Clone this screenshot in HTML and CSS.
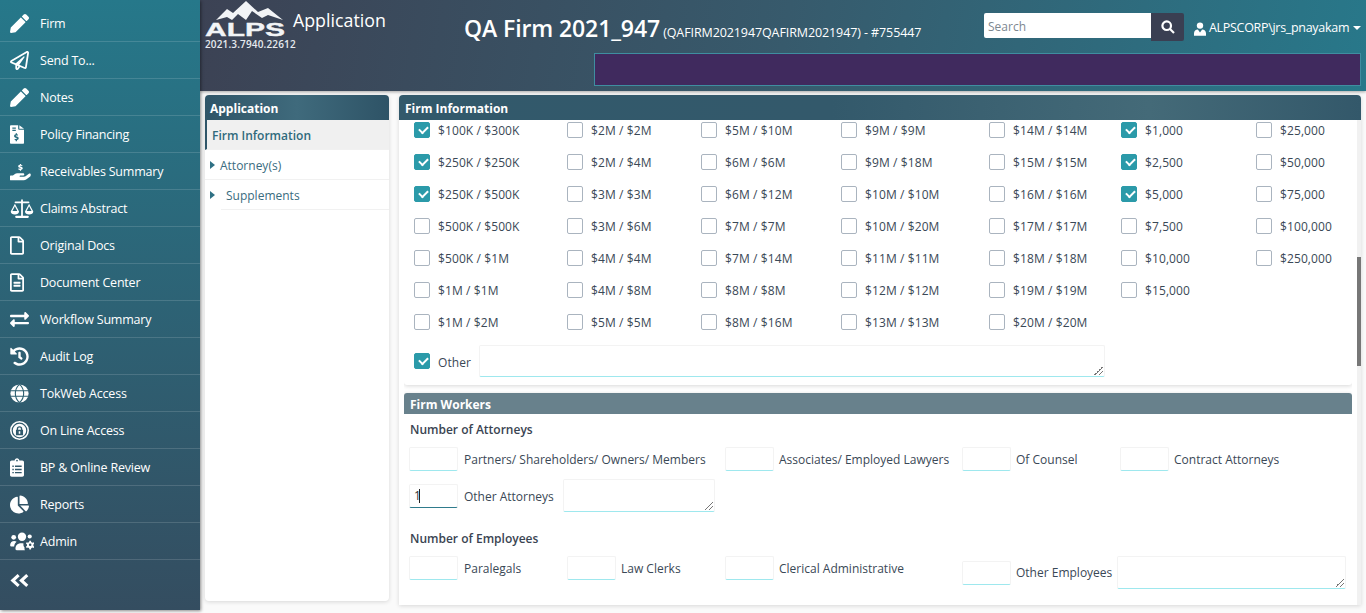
FILE: index.html
```html
<!DOCTYPE html>
<html lang="en">
<head>
<meta charset="utf-8">
<title>QA Firm 2021_947</title>
<link rel="stylesheet" href="styles.css">
</head>
<body>
<div class="app">
  <nav class="sidebar">
    <a class="nav-item"><svg class="ico" viewBox="0 0 512 512"><path d="M497.9 142.1l-46.1 46.1c-4.7 4.7-12.3 4.7-17 0l-111-111c-4.7-4.7-4.7-12.3 0-17l46.1-46.1c18.7-18.7 49.1-18.7 67.9 0l60.1 60.1c18.8 18.7 18.8 49.1 0 67.9zM284.2 99.8L21.6 362.4.4 483.9c-2.9 16.4 11.4 30.6 27.8 27.8l121.5-21.3 262.6-262.6c4.7-4.7 4.7-12.3 0-17l-111-111c-4.8-4.7-12.4-4.7-17.1 0z"/></svg><span>Firm</span></a>
    <a class="nav-item"><svg class="ico" viewBox="0 0 512 512"><path d="M440 6.5L24 246.4c-34.4 19.9-31.1 70.8 5.7 85.9L144 379.6V464c0 46.4 59.2 65.5 86.6 28.6l43.8-59.1 111.9 46.2c5.9 2.4 12.1 3.6 18.3 3.6 8.2 0 16.3-2.1 23.6-6.2 12.8-7.2 21.6-20 23.9-34.5l59.4-387.2c6.1-40.1-36.9-68.8-71.5-48.9zM192 464v-64.6l36.6 15.1L192 464zm212.6-28.7l-153.8-63.5L391 169.5c10.7-15.5-9.5-33.5-23.7-21.2L155.8 332.6 48 288 464 48l-59.4 387.3z"/></svg><span>Send To...</span></a>
    <a class="nav-item"><svg class="ico" viewBox="0 0 512 512"><path d="M497.9 142.1l-46.1 46.1c-4.7 4.7-12.3 4.7-17 0l-111-111c-4.7-4.7-4.7-12.3 0-17l46.1-46.1c18.7-18.7 49.1-18.7 67.9 0l60.1 60.1c18.8 18.7 18.8 49.1 0 67.9zM284.2 99.8L21.6 362.4.4 483.9c-2.9 16.4 11.4 30.6 27.8 27.8l121.5-21.3 262.6-262.6c4.7-4.7 4.7-12.3 0-17l-111-111c-4.8-4.7-12.4-4.7-17.1 0z"/></svg><span>Notes</span></a>
    <a class="nav-item"><svg class="ico doc" viewBox="0 0 384 512"><path fill-rule="evenodd" d="M0 24C0 11 11 0 24 0h200v104c0 13 11 24 24 24h136v360c0 13-11 24-24 24H24c-13 0-24-11-24-24zM256 0l128 96H256zM64 64v32h96V64zm0 64v32h96v-32zm128 96h-36v28c-26 4-44 24-44 48 0 30 24 42 50 50 20 6 28 10 28 18 0 8-10 12-20 12-12 0-24-4-34-10l-14 28c10 8 20 12 34 14v28h36v-28c28-4 46-24 46-50 0-30-24-42-50-50-20-6-28-10-28-18 0-6 8-10 18-10 12 0 22 4 30 8l14-28c-8-6-18-10-30-12z"/></svg><span>Policy Financing</span></a>
    <a class="nav-item"><svg class="ico hand" viewBox="0 0 576 512"><path d="M271 232v-20c-22-3-37-11-46-18l14-24c10 7 24 13 36 13 10 0 17-4 17-11 0-8-8-12-26-18-26-8-42-19-42-41 0-21 17-36 47-40V52h32v20c17 2 30 8 39 14l-13 24c-8-5-20-10-32-10-12 0-15 5-15 9 0 6 6 10 28 18 28 9 40 23 40 42 0 21-14 38-47 43v20z"/><path d="M565 326c-11-14-33-16-48-5l-90 66c-12 9-28 13-44 13H280c-9 0-16-7-16-16s7-16 16-16h78c16 0 31-11 34-27 3-20-12-37-32-37H200c-27 0-53 9-74 26l-46 38H16c-9 0-16 7-16 16v96c0 9 7 16 16 16h357c29 0 57-10 80-27l101-75c16-12 20-52 11-68z"/></svg><span>Receivables Summary</span></a>
    <a class="nav-item"><svg class="ico wide" viewBox="0 0 640 512"><path fill-rule="evenodd" d="M296 64V32c0-13 11-24 24-24s24 11 24 24v32h152c13 0 24 11 24 24s-11 24-24 24H344v336h136c13 0 24 11 24 24s-11 40-24 40H160c-13 0-24-27-24-40s11-24 24-24h136V112H144c-13 0-24-11-24-24s11-24 24-24z"/><path fill-rule="evenodd" d="M128 130L240 336c0 48-50 80-112 80S16 384 16 336zM128 196L62 320h132zM512 130l112 206c0 48-50 80-112 80s-112-32-112-80zM512 196l-66 124h132z"/></svg><span>Claims Abstract</span></a>
    <a class="nav-item"><svg class="ico doc" viewBox="0 0 384 512"><path d="M369.9 97.9L286 14C277 5 264.8-.1 252.1-.1H48C21.5 0 0 21.5 0 48v416c0 26.5 21.5 48 48 48h288c26.5 0 48-21.5 48-48V131.9c0-12.7-5.1-25-14.1-34zM332.1 128H256V51.9l76.1 76.1zM48 464V48h160v104c0 13.3 10.7 24 24 24h104v288H48z"/></svg><span>Original Docs</span></a>
    <a class="nav-item"><svg class="ico doc" viewBox="0 0 384 512"><path d="M288 248v28c0 6.6-5.4 12-12 12H108c-6.6 0-12-5.4-12-12v-28c0-6.6 5.4-12 12-12h168c6.6 0 12 5.4 12 12zm-12 72H108c-6.6 0-12 5.4-12 12v28c0 6.6 5.4 12 12 12h168c6.6 0 12-5.4 12-12v-28c0-6.6-5.4-12-12-12zm108-188.100V464c0 26.500-21.500 48-48 48H48c-26.500 0-48-21.500-48-48V48C0 21.500 21.500 0 48 0h204.100C264.800 0 277 5.100 286 14.100L369.900 98c9 8.900 14.100 21.200 14.100 33.900zm-128-80V128h76.100L256 51.900zM336 464V176H232c-13.300 0-24-10.700-24-24V48H48v416h288z"/></svg><span>Document Center</span></a>
    <a class="nav-item"><svg class="ico" viewBox="0 0 512 512"><path d="M0 168v-16c0-13.255 10.745-24 24-24h360V80c0-21.367 25.899-32.042 40.971-16.971l80 80c9.372 9.373 9.372 24.569 0 33.941l-80 80C409.956 271.982 384 261.456 384 240v-48H24c-13.255 0-24-10.745-24-24zm488 152H128v-48c0-21.314-25.862-32.080-40.971-16.971l-80 80c-9.372 9.373-9.372 24.569 0 33.941l80 80C102.057 463.997 128 453.437 128 432v-48h360c13.255 0 24-10.745 24-24v-16c0-13.255-10.745-24-24-24z"/></svg><span>Workflow Summary</span></a>
    <a class="nav-item"><svg class="ico" viewBox="0 0 512 512"><path d="M504 255.531c.253 136.64-111.18 248.372-247.82 248.468-59.015.042-113.223-20.53-155.822-54.911-11.077-8.94-11.905-25.541-1.839-35.607l11.267-11.267c8.609-8.609 22.353-9.551 31.891-1.984C173.062 425.135 212.781 440 256 440c101.705 0 184-82.311 184-184 0-101.705-82.311-184-184-184-48.814 0-93.149 18.969-126.068 49.932l50.754 50.754c10.08 10.08 2.941 27.314-11.313 27.314H24c-8.837 0-16-7.163-16-16V38.627c0-14.254 17.234-21.393 27.314-11.314l49.372 49.372C129.209 34.136 189.552 8 256 8c136.81 0 247.747 110.78 248 247.531zm-180.912 78.784l9.823-12.63c8.138-10.463 6.253-25.542-4.21-33.679L288 256.349V152c0-13.255-10.745-24-24-24h-16c-13.255 0-24 10.745-24 24v135.651l65.409 50.874c10.463 8.137 25.541 6.253 33.679-4.21z"/></svg><span>Audit Log</span></a>
    <a class="nav-item"><svg class="ico" viewBox="0 0 24 24"><circle cx="12" cy="12" r="11.5"/><path class="cut" d="M.5 8.500h23M.5 15.500h23M12 .5c-7 6-7 17 0 23M12 .5c7 6 7 17 0 23"/></svg><span>TokWeb Access</span></a>
    <a class="nav-item"><svg class="ico" viewBox="0 0 24 24"><path fill-rule="evenodd" d="M12 0a12 12 0 1 0 0 24 12 12 0 0 0 0-24zm0 2a10 10 0 1 1 0 20 10 10 0 0 1 0-20z"/><path fill-rule="evenodd" d="M12 3.500a8.500 8.500 0 1 0 0 17 8.500 8.500 0 0 0 0-17zM12 6.500a3.500 3.500 0 0 1 3.500 3.500v1h1v7h-9v-7h1v-1A3.500 3.500 0 0 1 12 6.500zm0 1.700a1.800 1.800 0 0 0-1.800 1.800v1h3.600v-1A1.800 1.800 0 0 0 12 8.200zM11 13v3h2v-3z"/></svg><span>On Line Access</span></a>
    <a class="nav-item"><svg class="ico doc" viewBox="0 0 384 512"><path fill-rule="evenodd" d="M336 64h-80c0-35.300-28.700-64-64-64s-64 28.700-64 64H48C21.500 64 0 85.500 0 112v352c0 26.500 21.500 48 48 48h288c26.500 0 48-21.500 48-48V112c0-26.500-21.500-48-48-48zM192 40a24 24 0 1 1 0 48 24 24 0 0 1 0-48zM64 200h40v40H64zm0 88h40v40H64zm0 88h40v40H64zm72-176h184v40H136zm0 88h184v40H136zm0 88h184v40H136z"/></svg><span>BP &amp; Online Review</span></a>
    <a class="nav-item"><svg class="ico" viewBox="0 0 544 512"><path d="M527.790 288H290.500l158.030 158.030c6.040 6.040 15.980 6.530 22.190.68 38.700-36.460 65.320-85.610 73.130-140.860 1.340-9.460-6.510-17.850-16.060-17.850zm-15.830-64.800C503.720 103.740 408.260 8.280 288.800.04 279.680-.59 272 7.100 272 16.240V240h223.770c9.140 0 16.820-7.680 16.190-16.800zM224 288V50.710c0-9.550-8.390-17.400-17.840-16.060C86.990 51.490-4.100 155.600.14 280.370 4.500 408.510 114.830 513.590 243.030 511.980c50.400-.63 96.970-16.870 135.260-44.030 7.900-5.600 8.420-17.230 1.570-24.080z"/></svg><span>Reports</span></a>
    <a class="nav-item"><svg class="ico wide" viewBox="0 0 640 512"><circle cx="96" cy="144" r="64"/><circle cx="320" cy="128" r="112"/><circle cx="528" cy="120" r="56"/><path d="M0 352c0-70 50-112 112-112 24 0 44 8 62 20-40 30-62 76-66 132H32c-18 0-32-14-32-40zM144 440c0-90 70-140 160-140 20 0 40 3 58 9-10 40 0 80 26 106-6 30-2 55 10 77H176c-18 0-32-14-32-32z"/><path fill-rule="evenodd" d="M520 236l40 0 8 36 30 18 36-12 20 34-28 26v34l28 26-20 34-36-12-30 18-8 36h-40l-8-36-30-18-36 12-20-34 28-26v-34l-28-26 20-34 36 12 30-18zM540 310a34 34 0 1 0 0 68 34 34 0 0 0 0-68z"/></svg><span>Admin</span></a>
    <a class="collapse"><svg viewBox="0 0 22 16"><path d="M9.500 2 3 8l6.500 6M19 2l-6.500 6 6.500 6"/></svg></a>
  </nav>

  <div class="main">
    <header class="topbar">
      <div class="toprow">
        <div class="brand">
          <svg class="logo" viewBox="0 0 82 37"><path d="M11 19 22 8l6 4L41 0l12 11 10-4 15 12-15-5-6 3-10-7-6 9-8-6-6 6-5-3z"/><text x="0" y="35" textLength="80" lengthAdjust="spacingAndGlyphs">ALPS</text></svg>
          <div class="version">2021.3.7940.22612</div>
        </div>
        <div class="appname">Application</div>
        <div class="firm"><span class="firm-name">QA Firm 2021_947</span> <span class="firm-code">(QAFIRM2021947QAFIRM2021947) - #755447</span></div>
        <div class="search"><input class="search-input" placeholder="Search"><button class="search-btn"><svg viewBox="0 0 14 14"><circle cx="5.700" cy="5.700" r="4.300"/><path d="m9 9 4 4"/></svg></button></div>
        <div class="user"><svg viewBox="0 0 14 16"><circle cx="7" cy="4" r="3.700"/><path d="M0 16v-3c0-3 2-4.500 4.500-4.500L7 12l2.500-3.500C12 8.500 14 10 14 13v3z"/></svg><span>ALPSCORP\jrs_pnayakam</span><i class="caret"></i></div>
      </div>
      <div class="notice"></div>
    </header>

    <div class="workspace">
      <aside class="tree">
        <h2 class="panel-head tree-head">Application</h2>
        <div class="tree-item active">Firm Information</div>
        <div class="tree-item"><i class="tri"></i>Attorney(s)</div>
        <div class="tree-item sub"><i class="tri"></i><span>Supplements</span></div>
      </aside>

      <section class="detail">
        <h2 class="panel-head detail-head">Firm Information</h2>
        <div class="scroller">
          <div class="scroll-content">
            <div class="card limits">
              <div class="check-grid">
                <label class="chk"><i class="box on"></i>$100K / $300K</label><label class="chk"><i class="box"></i>$2M / $2M</label><label class="chk"><i class="box"></i>$5M / $10M</label><label class="chk"><i class="box"></i>$9M / $9M</label><label class="chk"><i class="box"></i>$14M / $14M</label><label class="chk"><i class="box on"></i>$1,000</label><label class="chk"><i class="box"></i>$25,000</label>
                <label class="chk"><i class="box on"></i>$250K / $250K</label><label class="chk"><i class="box"></i>$2M / $4M</label><label class="chk"><i class="box"></i>$6M / $6M</label><label class="chk"><i class="box"></i>$9M / $18M</label><label class="chk"><i class="box"></i>$15M / $15M</label><label class="chk"><i class="box on"></i>$2,500</label><label class="chk"><i class="box"></i>$50,000</label>
                <label class="chk"><i class="box on"></i>$250K / $500K</label><label class="chk"><i class="box"></i>$3M / $3M</label><label class="chk"><i class="box"></i>$6M / $12M</label><label class="chk"><i class="box"></i>$10M / $10M</label><label class="chk"><i class="box"></i>$16M / $16M</label><label class="chk"><i class="box on"></i>$5,000</label><label class="chk"><i class="box"></i>$75,000</label>
                <label class="chk"><i class="box"></i>$500K / $500K</label><label class="chk"><i class="box"></i>$3M / $6M</label><label class="chk"><i class="box"></i>$7M / $7M</label><label class="chk"><i class="box"></i>$10M / $20M</label><label class="chk"><i class="box"></i>$17M / $17M</label><label class="chk"><i class="box"></i>$7,500</label><label class="chk"><i class="box"></i>$100,000</label>
                <label class="chk"><i class="box"></i>$500K / $1M</label><label class="chk"><i class="box"></i>$4M / $4M</label><label class="chk"><i class="box"></i>$7M / $14M</label><label class="chk"><i class="box"></i>$11M / $11M</label><label class="chk"><i class="box"></i>$18M / $18M</label><label class="chk"><i class="box"></i>$10,000</label><label class="chk"><i class="box"></i>$250,000</label>
                <label class="chk"><i class="box"></i>$1M / $1M</label><label class="chk"><i class="box"></i>$4M / $8M</label><label class="chk"><i class="box"></i>$8M / $8M</label><label class="chk"><i class="box"></i>$12M / $12M</label><label class="chk"><i class="box"></i>$19M / $19M</label><label class="chk"><i class="box"></i>$15,000</label><span></span>
                <label class="chk"><i class="box"></i>$1M / $2M</label><label class="chk"><i class="box"></i>$5M / $5M</label><label class="chk"><i class="box"></i>$8M / $16M</label><label class="chk"><i class="box"></i>$13M / $13M</label><label class="chk"><i class="box"></i>$20M / $20M</label>
              </div>
              <div class="other-row">
                <label class="chk"><i class="box on"></i>Other</label>
                <div class="area other-area"></div>
              </div>
            </div>

            <div class="card workers">
              <h3 class="workers-head">Firm Workers</h3>
              <div class="workers-body">
                <div class="group-title">Number of Attorneys</div>
                <div class="field-row">
                  <div class="cell c316"><div class="num"></div><span>Partners/ Shareholders/ Owners/ Members</span></div>
                  <div class="cell c237"><div class="num"></div><span>Associates/ Employed Lawyers</span></div>
                  <div class="cell c158"><div class="num"></div><span>Of Counsel</span></div>
                  <div class="cell"><div class="num"></div><span>Contract Attorneys</span></div>
                </div>
                <div class="field-row second">
                  <div class="cell"><div class="num active">1<i class="cursor"></i></div><span>Other Attorneys</span><div class="area small-area"></div></div>
                </div>
                <div class="group-title employees">Number of Employees</div>
                <div class="field-row third">
                  <div class="cell c158"><div class="num"></div><span>Paralegals</span></div>
                  <div class="cell c158"><div class="num"></div><span>Law Clerks</span></div>
                  <div class="cell c237"><div class="num"></div><span>Clerical Administrative</span></div>
                  <div class="cell"><div class="num"></div><span>Other Employees</span><div class="area wide-area"></div></div>
                </div>
              </div>
            </div>
          </div>
          <div class="track"><div class="thumb"></div></div>
        </div>
      </section>
    </div>
  </div>
</div>
</body>
</html>
```

FILE: styles.css
```css
* { box-sizing: border-box; }
html, body { margin: 0; height: 100%; overflow: hidden; }
body {
  background: #fafafa;
  font-family: "Open Sans", "Noto Sans", sans-serif;
  font-size: 12px;
  color: #3a4856;
}
.app { display: flex; height: 613px; }

/* sidebar */
.sidebar {
  flex: 0 0 200px;
  height: 610px;
  padding-top: 5px;
  background: linear-gradient(180deg, #26788a 0%, #344d60 100%);
  box-shadow: 1px 1px 3px rgba(0,0,0,.45);
  position: relative;
  z-index: 2;
}
.nav-item {
  display: flex;
  align-items: center;
  height: 37px;
  padding-left: 10px;
  padding-top: 1px;
  color: #fff;
  font-size: 12.5px;
  letter-spacing: -.2px;
  border-bottom: 1px solid rgba(255,255,255,.14);
}
.ico {
  flex: 0 0 19px;
  width: 19px;
  height: 19px;
  margin-right: 11px;
  fill: #fff;
}
.ico .cut { fill: none; stroke: #2e6071; stroke-width: 1.4; }
.ico.wide { flex-basis: 24px; width: 24px; margin-right: 6px; }
.ico.hand { flex-basis: 21px; width: 21px; margin-right: 9px; }
.ico.doc { flex-basis: 14px; width: 14px; margin-right: 16px; }
.collapse { display: block; padding: 13px 0 0 10px; }
.collapse svg { display: block; width: 20px; height: 15px; fill: none; stroke: #fff; stroke-width: 3.4; }

/* top bar */
.main { flex: 1; min-width: 0; display: flex; flex-direction: column; }
.topbar {
  height: 91px;
  background: linear-gradient(100deg, #3c4254 0%, #375a6c 50%, #28788a 100%);
  box-shadow: 0 1px 3px rgba(0,0,0,.35);
  color: #fff;
}
.toprow { display: flex; height: 53px; }
.brand { width: 93px; padding: 1px 0 0 5px; }
.logo { display: block; width: 82px; height: 37px; fill: #f2f4f6; overflow: visible; }
.logo text { font: 700 19px "Liberation Sans", sans-serif; fill: #f2f4f6; stroke: #f2f4f6; stroke-width: .35; }
.version { font-size: 10px; line-height: 13px; font-weight: 600; letter-spacing: .15px; color: #e6eaee; white-space: nowrap; }
.appname { width: 171px; padding-top: 7px; font-size: 17.8px; line-height: 26px; color: #fff; }
.firm { width: 520px; padding-top: 13px; line-height: 30px; white-space: nowrap; }
.firm-name { font-size: 23px; font-weight: 600; letter-spacing: -.1px; }
.firm-code { font-size: 12.5px; letter-spacing: -.1px; }
.search { display: flex; align-items: flex-start; width: 200px; padding-top: 13px; }
.search-input {
  width: 167px;
  height: 25px;
  border: 0;
  border-radius: 2px 0 0 2px;
  padding: 2px 4px 0;
  font: 12px "Open Sans", sans-serif;
  background: #fff;
}
.search-input::placeholder { color: #7d8790; opacity: 1; }
.search-btn {
  width: 33px;
  height: 28px;
  padding: 0;
  border: 0;
  border-radius: 0 2px 2px 0;
  background: #3a3f52;
  display: flex;
  align-items: center;
  justify-content: center;
}
.search-btn svg { width: 14px; height: 14px; fill: none; stroke: #fff; stroke-width: 2.2; }
.user { display: flex; align-items: flex-start; padding: 19px 0 0 10px; font-size: 12.5px; line-height: 18px; letter-spacing: -.3px; white-space: nowrap; }
.user svg { width: 12px; height: 14px; margin: 3px 3px 0 0; fill: #fff; }
.caret { width: 0; height: 0; margin: 7px 0 0 4px; border: 4px solid transparent; border-top-color: #fff; border-bottom: 0; }
.notice {
  height: 33px;
  margin: 0 5px 0 394px;
  background: #402a5e;
  border: 1px solid #3f8ea0;
}

/* workspace */
.workspace { flex: 1; min-height: 0; display: flex; gap: 10px; padding: 4px 0 0 5px; }
.panel-head {
  margin: 0;
  height: 25px;
  padding: 1px 5px 0;
  line-height: 25px;
  font-size: 12px;
  font-weight: 700;
  color: #fff;
  border-radius: 4px 4px 0 0;
}
.tree {
  flex: 0 0 184px;
  height: 506px;
  background: #fff;
  border-radius: 4px;
  box-shadow: 0 1px 4px rgba(0,0,0,.14);
}
.tree-head { background: linear-gradient(90deg, #2f5568 0%, #3f6a7c 50%, #2e5366 100%); }
.tree-item {
  display: flex;
  align-items: center;
  height: 30px;
  padding: 1px 0 0 5px;
  color: #3a6c80;
  border-bottom: 1px solid #f1f1f1;
}
.tree-item.active {
  background: #f0f0f0;
  border-left: 2px solid #2f5568;
  font-weight: 600;
  color: #2f6a7c;
}
.tri {
  flex: none;
  width: 0;
  height: 0;
  margin-right: 5px;
  border-left: 5px solid #2f7084;
  border-top: 4.500px solid transparent;
  border-bottom: 4.500px solid transparent;
}
.tree-item.sub { border-bottom: 0; padding-top: 0; }
.tree-item.sub .tri { margin-right: 6px; }
.tree-item.sub span { flex: 1; height: 30px; padding: 3px 0 0 5px; line-height: 26px; border-bottom: 1px solid #f1f1f1; }
.detail {
  flex: 0 0 962px;
  height: 510px;
  display: flex;
  flex-direction: column;
  background: #fff;
  box-shadow: 0 1px 4px rgba(0,0,0,.14);
  border-radius: 4px 4px 0 0;
}
.detail-head { flex: none; padding-left: 6px; background: linear-gradient(90deg, #32596b 0%, #33596b 45%, #446a78 78%, #33586a 100%); }
.scroller { flex: 1; min-height: 0; display: flex; overflow: hidden; padding-left: 5px; }
.scroll-content { flex: 0 0 948px; overflow: hidden; }
.track { flex: 0 0 4px; margin-left: 5px; background: #f1f1f1; padding-top: 137px; }
.thumb { height: 109px; background: #777; }
.card { background: #fff; border-radius: 0 0 3px 3px; box-shadow: 0 1px 4px rgba(0,0,0,.16); }

/* limits */
.limits { height: 271px; margin-top: -6px; padding-left: 10px; margin-bottom: 8px; }
.check-grid { display: grid; grid-template-columns: 153px 134px 140px 148px 132px 135px 90px; grid-auto-rows: 32px; }
.chk { display: flex; align-items: center; white-space: nowrap; letter-spacing: .1px; }
.box {
  flex: none;
  width: 16px;
  height: 16px;
  margin-right: 8px;
  margin-top: -1px;
  border: 1px solid #aab4bf;
  border-radius: 2px;
  background: #fff;
  position: relative;
}
.box.on { background: #2b9aa9; border-color: #2b9aa9; }
.box.on::after {
  content: "";
  position: absolute;
  left: 4px;
  top: 3.500px;
  width: 7px;
  height: 4px;
  border-left: 2px solid #fff;
  border-bottom: 2px solid #fff;
  transform: rotate(-45deg);
}
.other-row { display: flex; align-items: center; margin-top: 7px; height: 32px; }
.other-row .chk { padding-top: 2px; }
.other-row .box { margin-top: -3px; }
.other-area { width: 626px; height: 32px; margin-left: 8px; }
.area {
  border: 1px solid #f3f3f3;
  border-bottom: 1px solid #9ee8ee;
  border-radius: 2px;
  background: #fff;
  position: relative;
  flex: none;
}
.area::after {
  content: "";
  position: absolute;
  right: 1px;
  bottom: 1px;
  width: 9px;
  height: 9px;
  background: linear-gradient(135deg, transparent 50%, #777 50%, #777 56%, transparent 56%, transparent 74%, #777 74%, #777 80%, transparent 80%);
}

/* workers */
.workers { height: 220px; border-radius: 3px 3px 0 0; }
.workers-head {
  margin: 0;
  height: 21px;
  padding: 1px 0 0 6px;
  line-height: 21px;
  font-size: 12px;
  font-weight: 700;
  color: #fff;
  background: #68818c;
  border-radius: 3px 3px 0 0;
}
.workers-body { padding: 7px 0 0 6px; }
.group-title { height: 18px; line-height: 18px; font-weight: 600; color: #3a4452; }
.group-title.employees { margin-top: 18px; }
.field-row { display: flex; margin: 8px 0 0 -1px; }
.field-row.third { align-items: flex-start; }
.field-row.second span { padding-top: 1px; }
.cell { display: flex; align-items: center; white-space: nowrap; }
.c316 { width: 316px; }
.c237 { width: 237px; }
.c158 { width: 158px; }
.num {
  flex: none;
  width: 49px;
  height: 24px;
  margin-right: 5px;
  border: 1px solid #f3f3f3;
  border-bottom: 1px solid #9ee8ee;
  border-radius: 2px;
  background: #fff;
  line-height: 22px;
  padding-left: 4px;
  color: #333;
}
.cell:first-child .num { margin-right: 6px; }
.num.active { border-bottom-color: #2f7b8c; }
.cursor { display: inline-block; width: 1px; height: 14px; margin-left: -2px; background: #222; vertical-align: -3px; }
.small-area { width: 152px; height: 33px; margin-left: 9px; }
.wide-area { width: 229px; height: 33px; margin-left: 5px; }
```
